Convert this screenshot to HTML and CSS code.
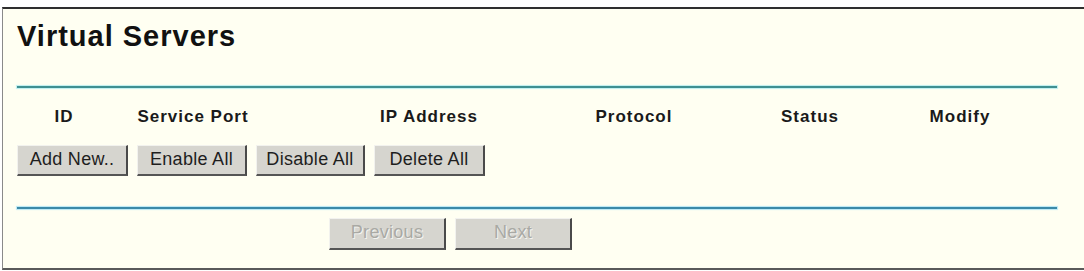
FILE: index.html
```html
<!DOCTYPE html>
<html>
<head>
<meta charset="utf-8">
<link rel="stylesheet" href="styles.css">
</head>
<body>
<div class="panel">
  <h1 class="title">Virtual Servers</h1>
  <div class="rule rule-top"></div>
  <div class="head">
    <div class="c1">ID</div>
    <div class="c2">Service Port</div>
    <div class="c3">IP Address</div>
    <div class="c4">Protocol</div>
    <div class="c6">Status</div>
    <div class="c7">Modify</div>
  </div>
  <div class="actions">
    <button class="btn b-add">Add New..</button>
    <button class="btn b-en">Enable All</button>
    <button class="btn b-dis">Disable All</button>
    <button class="btn b-del">Delete All</button>
  </div>
  <div class="rule rule-bottom"></div>
  <div class="nav">
    <button class="btn nav-btn" disabled>Previous</button>
    <button class="btn nav-btn" disabled>Next</button>
  </div>
</div>
</body>
</html>
```
FILE: styles.css
```css
html, body {
  margin: 0;
  padding: 0;
  background: #ffffff;
}
body {
  width: 1084px;
  height: 271px;
  overflow: hidden;
  font-family: "Liberation Sans", Arial, sans-serif;
}
.panel {
  margin: 7px 0 0 2px;
  height: 250px;
  box-sizing: content-box;
  background: #fffff2;
  border-top: 2px solid #2e2e2e;
  border-left: 1px solid #8a8a8a;
  border-bottom: 2px solid #5a5a5a;
  padding: 9px 0 0 14px;
  display: flex;
  flex-direction: column;
}
.title {
  margin: 0;
  font-size: 29px;
  line-height: 36px;
  letter-spacing: 1px;
  font-weight: bold;
  color: #111;
  height: 36px;
}
.rule {
  width: 1040px;
  height: 2px;
  flex: none;
}
.rule-top {
  margin-top: 32px;
  background: #3f9092;
  box-shadow: 0 0 1px 1px #bdeff0;
}
.rule-bottom {
  margin-top: 31px;
  background: #3b8aa8;
  box-shadow: 0 0 1px 1px #b9e8f6;
}
.head {
  margin-top: 17px;
  height: 24px;
  display: grid;
  grid-template-columns: 94px 164px 308px 102px 20px 210px 90px 1fr;
  align-items: center;
  font-size: 17px;
  font-weight: bold;
  letter-spacing: 1px;
  color: #1a1a1a;
  text-align: center;
  white-space: nowrap;
}
.c1 { grid-column: 1; }
.c2 { grid-column: 2; }
.c3 { grid-column: 3; }
.c4 { grid-column: 4; }
.c6 { grid-column: 6; }
.c7 { grid-column: 7; }
.actions {
  margin-top: 16px;
  display: flex;
  gap: 9px;
  height: 31px;
  flex: none;
}
.btn {
  box-sizing: border-box;
  height: 31px;
  margin: 0;
  padding: 0 0 2px 0;
  background: #d6d5cf;
  border-top: 1px solid #f2f2ee;
  border-left: 1px solid #f2f2ee;
  border-right: 2px solid #4a4a4a;
  border-bottom: 2px solid #555;
  font-family: "Liberation Sans", Arial, sans-serif;
  font-size: 18px;
  letter-spacing: 0.3px;
  color: #1e1e1e;
  white-space: nowrap;
}
.b-add { width: 111px; }
.b-en { width: 110px; }
.b-dis { width: 109px; }
.b-del { width: 111px; }
.nav {
  margin-top: 9px;
  margin-left: 312px;
  display: flex;
  gap: 9px;
  flex: none;
}
.nav-btn {
  width: 117px;
  height: 32px;
  color: #a9a9a4;
  text-shadow: 1px 1px 0 #f4f4f0;
}
```
